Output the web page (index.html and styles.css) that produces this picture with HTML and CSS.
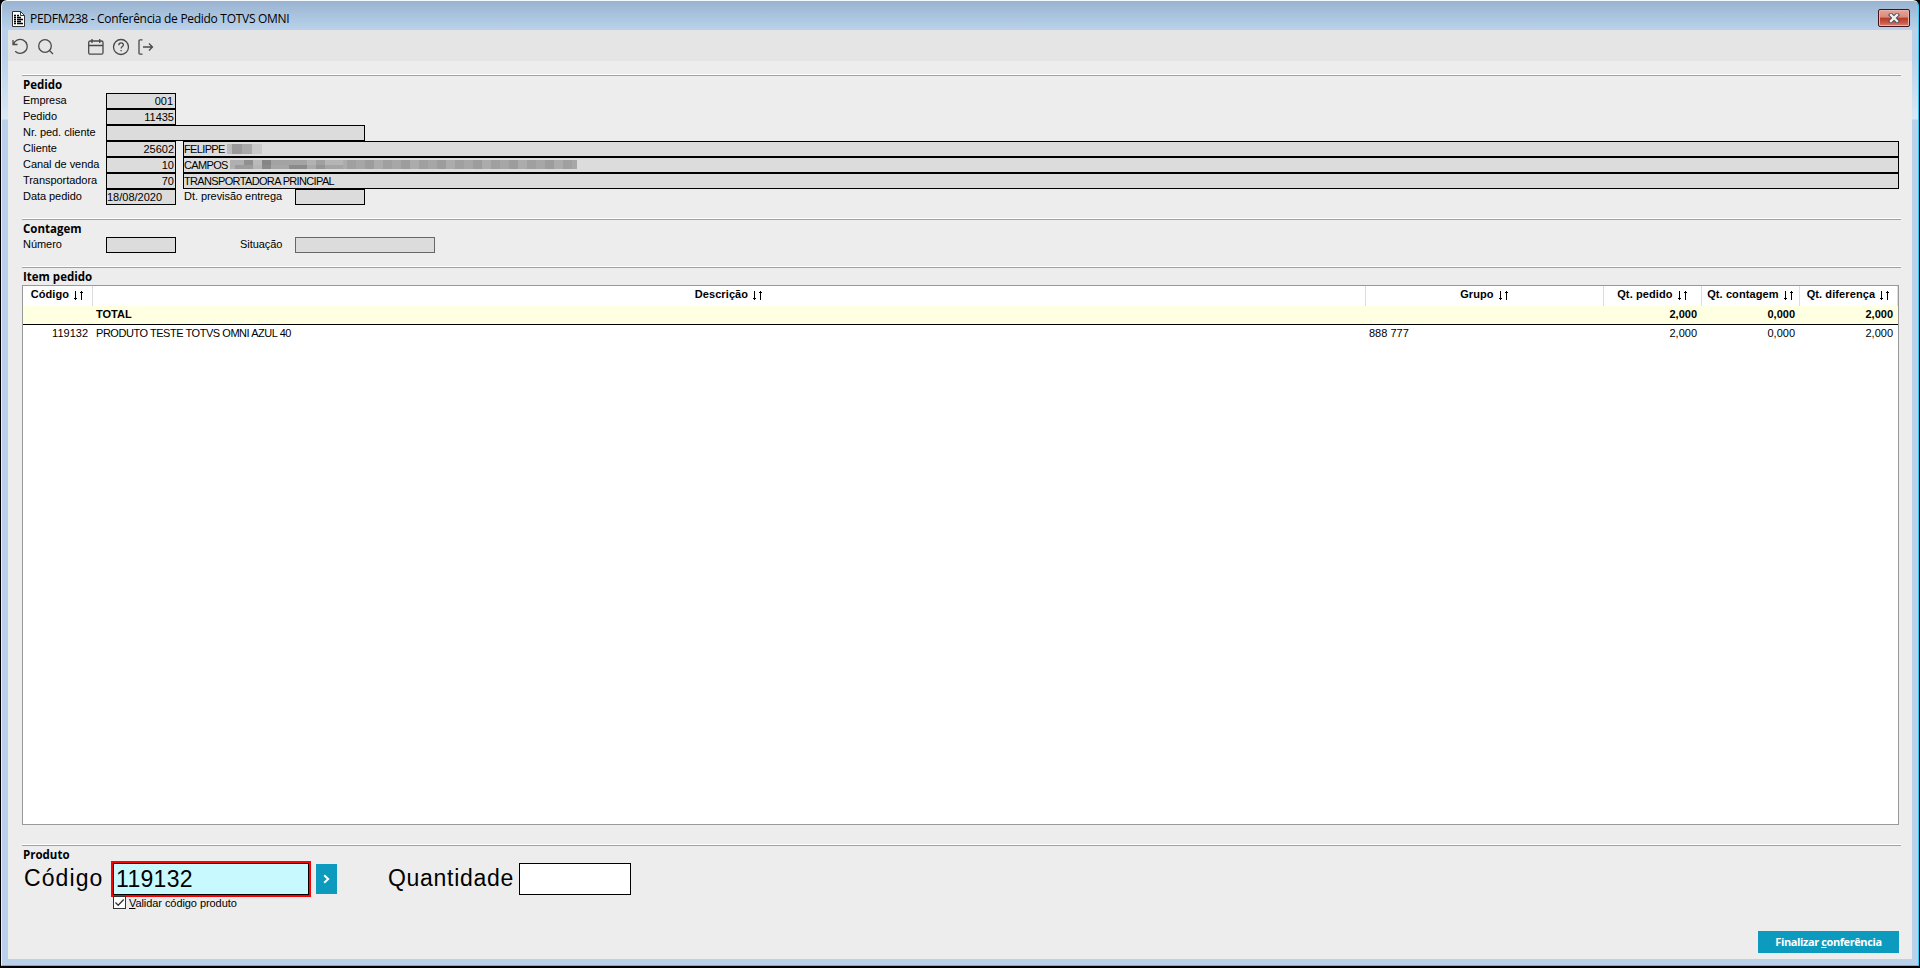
FILE: index.html
```html
<!DOCTYPE html>
<html lang="pt-BR">
<head>
    <meta charset="UTF-8">
    <meta name="viewport" content="width=device-width, initial-scale=1.0">
    <title>PEDFM238 - Conferência de Pedido TOTVS OMNI</title>
    <link rel="stylesheet" href="styles.css">
</head>
<body>
    <div class="window">
        <!-- Title bar -->
        <div class="titlebar">
            <svg class="doc-icon" width="13" height="16" viewBox="0 0 13 16">
                <path d="M.5.5h8l4 4v11H.5z" fill="#fff" stroke="#333"/>
                <path d="M8.5.5v4h4" fill="none" stroke="#333"/>
                <path d="M2 4.500h2M5 4.500h2M2 6.500h2M5 6.500h4M2 8.500h2M5 8.500h6M2 10.500h2M5 10.500h4M2 12.500h2M5 12.500h6" stroke="#000" stroke-width="1.300"/>
            </svg>
            <span class="title">PEDFM238 - Conferência de Pedido TOTVS OMNI</span>
            <button class="close" aria-label="Fechar">
                <svg width="12" height="10" viewBox="0 0 12 10">
                    <path d="M3 2l6 6M9 2l-6 6" stroke="#464a5c" stroke-width="4.200" stroke-linecap="square"/>
                    <path d="M3 2l6 6M9 2l-6 6" stroke="#f2f2f2" stroke-width="2.400" stroke-linecap="square"/>
                </svg>
            </button>
        </div>

        <!-- Toolbar -->
        <div class="toolbar">
            <svg width="18" height="18" viewBox="0 0 18 18"><path d="M1 2v4.500H5.500M1.500 6.300A7 7 0 1 1 3.200 13.300"/></svg>
            <svg width="18" height="18" viewBox="0 0 18 18"><circle cx="8" cy="8" r="6.300"/><path d="M12.500 12.500l3.500 3.500"/></svg>
            <svg class="calendar" width="18" height="18" viewBox="0 0 18 18"><rect x="1.700" y="3" width="14.300" height="13.200" rx="1.500"/><path d="M1.700 7.500H16M5 1v4M12.700 1v4"/></svg>
            <svg width="18" height="18" viewBox="0 0 18 18"><circle cx="9" cy="9" r="7.500"/><path d="M6.800 7.200c0-3 4.600-3 4.600-.3 0 1.700-2.300 1.700-2.300 3.600M9.100 12v1.300"/></svg>
            <svg width="18" height="18" viewBox="0 0 18 18"><path d="M5.500 1.800H3a1 1 0 0 0-1 1v12.400a1 1 0 0 0 1 1h2.500M6 9h9.500M12 5.500L15.500 9 12 12.500"/></svg>
        </div>

        <div class="content">
            <!-- Pedido -->
            <div class="section pedido">
                <h2>Pedido</h2>
                <div class="row">
                    <label>Empresa</label>
                    <div class="field num empresa">001</div>
                </div>
                <div class="row">
                    <label>Pedido</label>
                    <div class="field num">11435</div>
                </div>
                <div class="row">
                    <label>Nr. ped. cliente</label>
                    <div class="field wide"></div>
                </div>
                <div class="row">
                    <label>Cliente</label>
                    <div class="field num">25602</div>
                    <div class="field desc">FELIPPE<span class="mask mask-name"></span></div>
                </div>
                <div class="row">
                    <label>Canal de venda</label>
                    <div class="field num">10</div>
                    <div class="field desc">CAMPOS<span class="mask mask-channel"></span></div>
                </div>
                <div class="row">
                    <label>Transportadora</label>
                    <div class="field num">70</div>
                    <div class="field desc">TRANSPORTADORA PRINCIPAL</div>
                </div>
                <div class="row">
                    <label>Data pedido</label>
                    <div class="field date">18/08/2020</div>
                    <label class="second">Dt. previsão entrega</label>
                    <div class="field"></div>
                </div>
            </div>

            <!-- Contagem -->
            <div class="section contagem">
                <h2>Contagem</h2>
                <div class="row">
                    <label>Número</label>
                    <div class="field"></div>
                    <label class="second situacao">Situação</label>
                    <div class="field status"></div>
                </div>
            </div>

            <!-- Item pedido -->
            <div class="section items">
                <h2>Item pedido</h2>
                <div class="grid">
                    <div class="grid-row head">
                        <div>Código <i class="sort"></i></div>
                        <div>Descrição <i class="sort"></i></div>
                        <div>Grupo <i class="sort"></i></div>
                        <div>Qt. pedido <i class="sort"></i></div>
                        <div>Qt. contagem <i class="sort"></i></div>
                        <div>Qt. diferença <i class="sort"></i></div>
                    </div>
                    <div class="grid-row total">
                        <div></div>
                        <div>TOTAL</div>
                        <div></div>
                        <div class="right">2,000</div>
                        <div class="right">0,000</div>
                        <div class="right">2,000</div>
                    </div>
                    <div class="grid-row">
                        <div class="right">119132</div>
                        <div class="product">PRODUTO TESTE TOTVS OMNI AZUL 40</div>
                        <div>888 777</div>
                        <div class="right">2,000</div>
                        <div class="right">0,000</div>
                        <div class="right">2,000</div>
                    </div>
                </div>
            </div>

            <!-- Produto -->
            <div class="section produto">
                <h2>Produto</h2>
                <div class="big-row">
                    <label class="big codigo">Código</label>
                    <div class="highlight"><div class="code-input">119132</div></div>
                    <button class="go" aria-label="Avançar">
                        <svg width="7" height="10" viewBox="0 0 7 10"><path d="M1.200 1.200L5.200 5 1.200 8.800" fill="none" stroke="#fff" stroke-width="2"/></svg>
                    </button>
                    <label class="big quantidade">Quantidade</label>
                    <div class="qty-input"></div>
                </div>
                <div class="check-row">
                    <svg width="13" height="13" viewBox="0 0 13 13"><rect x=".5" y=".5" width="12" height="12" fill="#fff" stroke="#333"/><path d="M2.500 6.500l2.700 2.700 5.500-5.700" fill="none" stroke="#333" stroke-width="1.300"/></svg>
                    <span><u>V</u>alidar código produto</span>
                </div>
            </div>

            <div class="footer">
                <button class="finish">Finalizar&nbsp;<u>c</u>onferência</button>
            </div>
        </div>
    </div>
</body>
</html>
```

FILE: styles.css
```css
* {
    box-sizing: border-box;
}

body {
    margin: 0;
    height: 968px;
    padding: 0 1px 2px;
    background-color: #000;
    font-family: "Liberation Sans", Arial, sans-serif;
    font-size: 11px;
    color: #000;
    overflow: hidden;
}

.window {
    display: flex;
    flex-direction: column;
    height: 966px;
    padding: 0 6px 6px;
    border: 1px solid #35c9ee;
    border-left-color: #e4f1fb;
    border-top-color: #f4f8fc;
    border-radius: 6px 6px 0 0;
    background: linear-gradient(#99b4d1 0, #b9d1ea 28px, #b9d1ea 55px, #dbe8f6 118px, #b9d1ea 119px);
}

/* Title bar */
.titlebar {
    display: flex;
    align-items: center;
    flex: 0 0 29px;
    padding: 6px 2px 0 4px;
}

.title {
    margin-left: 5px;
    font-family: "Open Sans", sans-serif;
    font-size: 12px;
    letter-spacing: -0.29px;
    line-height: 16px;
    white-space: nowrap;
}

.close {
    display: flex;
    align-items: center;
    justify-content: center;
    width: 32px;
    height: 18px;
    margin: -2px 0 0 auto;
    padding: 0;
    border: 1px solid #43141a;
    border-radius: 2px;
    background: linear-gradient(#e5a497, #d98b7c 45%, #b93a24 50%, #c9594a 80%, #d98578);
    box-shadow: inset 0 0 0 1px #e9b5aa;
}

/* Toolbar */
.toolbar {
    display: flex;
    align-items: center;
    gap: 7px;
    flex: 0 0 31px;
    padding: 3px 0 0 4px;
    background-color: #e5e5e5;
}

.toolbar svg {
    fill: none;
    stroke: #4a4a4a;
    stroke-width: 1.3;
}

.toolbar .calendar {
    margin-left: 25px;
}

.content {
    flex: 1;
    display: flex;
    flex-direction: column;
    padding: 13px 11px 6px 14px;
    background-color: #ededed;
}

.section {
    border-top: 1px solid #fff;
}

h2 {
    margin: 0;
    padding: 1px 0 0 1px;
    border-top: 1px solid #a0a0a0;
    height: 18px;
    font-family: "Open Sans", sans-serif;
    font-size: 11.5px;
    font-weight: 700;
    line-height: 15px;
    white-space: nowrap;
}

.pedido {
    height: 144px;
}

.contagem {
    height: 48px;
}

.items {
    height: 578px;
}

.produto {
    height: 87px;
}

/* Form rows */
.row {
    display: flex;
    height: 16px;
}

.row label {
    width: 84px;
    padding-left: 1px;
    letter-spacing: -0.05px;
    line-height: 14px;
    white-space: nowrap;
}

.row label.second {
    width: 119px;
    padding-left: 8px;
}

.row label.situacao {
    padding-left: 64px;
}

.field {
    display: flex;
    width: 70px;
    height: 16px;
    padding: 0 1px;
    border: 1px solid #000;
    background-color: #dcdcdc;
    line-height: 15px;
    white-space: nowrap;
}

.num {
    justify-content: flex-end;
}

.empresa {
    padding-right: 2px;
}

.date {
    padding-left: 0;
}

.wide {
    width: 259px;
}

.desc {
    flex: 1;
    margin: 0 2px 0 7px;
    padding-left: 0;
    letter-spacing: -0.65px;
}

.status {
    width: 140px;
    border-color: #666;
}

/* Hidden customer data */
.mask {
    height: 10px;
    margin: 2px 0 0 2px;
}

.mask-name {
    width: 35px;
    background: linear-gradient(90deg, #bbb 5px, #999 5px 15px, #a9a9a9 15px 25px, #cacaca 25px);
}

.mask-channel {
    width: 347px;
    height: 9px;
    background:
        linear-gradient(90deg, #b0b0b0 14px, #909090 14px 23px, #bababa 23px 32px, #858585 32px 41px, #a3a3a3 41px 77px, #b2b2b2 77px 86px, #a0a0a0 86px 95px, #b5b5b5 95px 113px) no-repeat 0 0 / 113px 5px,
        linear-gradient(90deg, #b0b0b0 5px, #9c9c9c 5px 23px, #b5b5b5 23px 32px, #8a8a8a 32px 41px, #a6a6a6 41px 59px, #8b8b8b 59px 77px, #aaa 77px 86px, #959595 86px 95px, #a5a5a5 95px 113px) no-repeat 0 5px / 113px 4px,
        repeating-linear-gradient(90deg, #acacac 0 9px, #a0a0a0 9px 18px, #a7a7a7 18px 27px, #9d9d9d 27px 36px);
}

/* Items grid */
.grid {
    height: 540px;
    margin-right: 2px;
    border: 1px solid #999;
    background-color: #fff;
}

.grid-row {
    display: grid;
    grid-template-columns: 70px 1273px 238px 98px 98px 98px;
    line-height: 17px;
    white-space: nowrap;
}

.grid-row > div {
    padding: 0 5px 0 3px;
}

.head {
    height: 20px;
    font-weight: 700;
    text-align: center;
    letter-spacing: 0.1px;
    line-height: 17px;
}

.grid-row.head > div {
    border-right: 1px solid #ddd;
    padding: 0 1px 0 0;
}

.sort {
    display: inline-block;
    width: 10px;
    height: 9px;
    margin-left: 1px;
    vertical-align: -2px;
    background:
        linear-gradient(#000, #000) no-repeat 2px 0 / 1px 9px,
        linear-gradient(#000, #000) no-repeat 1px 7px / 3px 1px,
        linear-gradient(#000, #000) no-repeat 8px 0 / 1px 9px,
        linear-gradient(#000, #000) no-repeat 7px 1px / 3px 1px;
}

.total {
    height: 19px;
    border-bottom: 1px solid #000;
    background-color: #ffffe1;
    font-weight: 700;
}

.right {
    text-align: right;
}

.product {
    letter-spacing: -0.46px;
}

/* Product entry */
.big-row {
    display: flex;
    height: 34px;
}

.big {
    font-size: 23px;
    line-height: 30px;
    white-space: nowrap;
}

.codigo {
    width: 89px;
    padding-left: 2px;
    letter-spacing: 1.1px;
}

.highlight {
    width: 200px;
    height: 36px;
    margin-top: -2px;
    border: 2px solid #f00;
}

.code-input {
    height: 32px;
    padding-left: 2px;
    border: 1px solid #000;
    background-color: #c8f9ff;
    font-size: 23px;
    letter-spacing: 0.3px;
    line-height: 31px;
}

.go {
    display: flex;
    align-items: center;
    justify-content: center;
    width: 21px;
    height: 30px;
    margin: 1px 0 0 5px;
    padding: 0;
    border: 0;
    background-color: #0c9abe;
}

.quantidade {
    width: 131px;
    margin-left: 51px;
    letter-spacing: 0.7px;
}

.qty-input {
    width: 112px;
    height: 32px;
    border: 1px solid #000;
    background-color: #fff;
}

.check-row {
    display: flex;
    gap: 3px;
    height: 13px;
    margin: -1px 0 0 91px;
    letter-spacing: -0.07px;
    line-height: 14px;
}

.footer {
    display: flex;
    justify-content: flex-end;
    padding-right: 2px;
}

.finish {
    width: 141px;
    height: 22px;
    padding: 0;
    border: 0;
    background-color: #0c9abe;
    color: #fff;
    font-family: "Open Sans", sans-serif;
    font-size: 11px;
    font-weight: 700;
    letter-spacing: -0.4px;
    line-height: 22px;
}
```
